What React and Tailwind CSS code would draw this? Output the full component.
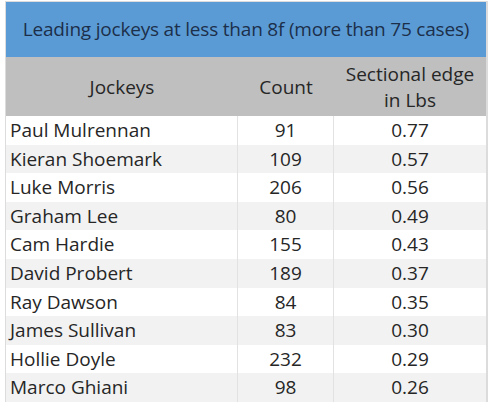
const ROWS = [
  ["Paul Mulrennan", 91, "0.77"],
  ["Kieran Shoemark", 109, "0.57"],
  ["Luke Morris", 206, "0.56"],
  ["Graham Lee", 80, "0.49"],
  ["Cam Hardie", 155, "0.43"],
  ["David Probert", 189, "0.37"],
  ["Ray Dawson", 84, "0.35"],
  ["James Sullivan", 83, "0.30"],
  ["Hollie Doyle", 232, "0.29"],
  ["Marco Ghiani", 98, "0.26"],
];

export default function App() {
  return (
    <div
      className="w-[493px] h-[405px] bg-white pl-[5px] pt-[1px] overflow-hidden"
      style={{ fontFamily: "'Open Sans', 'Noto Sans', sans-serif" }}
    >
      <div className="w-[483px] border-l border-t border-r-[2px] border-[#dcdcdc]">
        <div className="w-[480px] h-[55px] bg-[#5b9bd5] flex items-center justify-center text-[19px] text-[#1c2f4a] tracking-[-0.2px] whitespace-nowrap">
          Leading jockeys at less than 8f (more than 75 cases)
        </div>
        <div className="w-[480px] h-[59px] bg-[#bfbfbf] grid grid-cols-[232px_96px_152px] items-center text-[19px] text-[#262626] text-center leading-[26px]">
          <div>Jockeys</div>
          <div>Count</div>
          <div>
            Sectional edge
            <br />
            in Lbs
          </div>
        </div>
        {ROWS.map(([name, count, edge], i) => (
          <div
            key={name}
            className={`w-[480px] h-[28.6px] grid grid-cols-[232px_96px_152px] items-center text-[19px] text-[#262626] ${
              i % 2 === 0 ? "bg-white" : "bg-[#f2f2f2]"
            }`}
          >
            <div className="pl-[4px] h-full flex items-center border-r border-[#e2e2e2]">{name}</div>
            <div className="text-center h-full flex items-center justify-center border-r border-[#e2e2e2]">{count}</div>
            <div className="text-center">{edge}</div>
          </div>
        ))}
      </div>
    </div>
  );
}
